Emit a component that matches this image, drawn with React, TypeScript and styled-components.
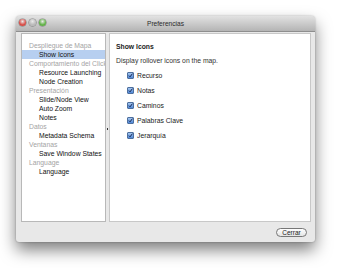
import React from "react"
import styled, { createGlobalStyle } from "styled-components"

const GlobalStyle = createGlobalStyle`
  html, body { margin: 0; padding: 0; background: #fff; }
  body { font-family: "Liberation Sans", Arial, sans-serif; }
`

type Item = { label: string; header?: boolean; selected?: boolean }

const sidebarItems: Item[] = [
  { label: "Despliegue de Mapa", header: true },
  { label: "Show Icons", selected: true },
  { label: "Comportamiento del Click", header: true },
  { label: "Resource Launching" },
  { label: "Node Creation" },
  { label: "Presentación", header: true },
  { label: "Slide/Node View" },
  { label: "Auto Zoom" },
  { label: "Notes" },
  { label: "Datos", header: true },
  { label: "Metadata Schema" },
  { label: "Ventanas", header: true },
  { label: "Save Window States" },
  { label: "Language", header: true },
  { label: "Language" },
]

const options = ["Recurso", "Notas", "Caminos", "Palabras Clave", "Jerarquía"]

const App: React.FC<{}> = () => {
  return (
    <Page>
      <GlobalStyle />
      <Window>
        <TitleBar>
          <Lights>
            <Light color="#d84a44" />
            <Light color="#b9b9b9" />
            <Light color="#5fb244" />
          </Lights>
          <Title>Preferencias</Title>
        </TitleBar>
        <Body>
          <Panels>
            <Sidebar>
              {sidebarItems.map((item, i) => (
                <SideRow key={i} header={item.header} selected={item.selected}>
                  {item.label}
                </SideRow>
              ))}
            </Sidebar>
            <Splitter>
              <Grip />
            </Splitter>
            <Content>
              <Heading>Show Icons</Heading>
              <Description>Display rollover icons on the map.</Description>
              <Options>
                {options.map((o) => (
                  <Option key={o}>
                    <Check>
                      <svg width="7" height="7" viewBox="0 0 7 7">
                        <path d="M1.2 3.6 L2.9 5.3 L6.2 0.9" stroke="#0e1c44" strokeWidth="1.3" fill="none" />
                      </svg>
                    </Check>
                    {o}
                  </Option>
                ))}
              </Options>
            </Content>
          </Panels>
          <Footer>
            <Button>Cerrar</Button>
          </Footer>
        </Body>
      </Window>
    </Page>
  )
}

export default App

const Page = styled.div`
  width: 340px;
  height: 268px;
  padding: 16px 0 0 16px;
  box-sizing: border-box;
`

const Window = styled.div`
  width: 299px;
  height: 226px;
  background: #e8e8e8;
  border-radius: 4px 4px 3px 3px;
  box-shadow: 0 8px 16px rgba(0, 0, 0, 0.5), 0 0 2px rgba(0, 0, 0, 0.3);
  display: flex;
  flex-direction: column;
  overflow: hidden;
`

const TitleBar = styled.div`
  height: 16px;
  flex: none;
  position: relative;
  display: flex;
  align-items: center;
  justify-content: center;
  background: linear-gradient(#e2e2e2, #b4b4b4);
  border-bottom: 1px solid #8e8e8e;
  box-sizing: border-box;
`

const Lights = styled.div`
  position: absolute;
  left: 3px;
  top: 3px;
  display: flex;
  gap: 3px;
`

const Light = styled.span<{ color: string }>`
  width: 7px;
  height: 7px;
  border-radius: 50%;
  background: radial-gradient(circle at 50% 35%, #fff8 0, ${(p) => p.color} 60%);
  box-shadow: 0 0 0 0.5px rgba(0, 0, 0, 0.4);
`

const Title = styled.div`
  font-size: 6.6px;
  color: #2a2a2a;
`

const Body = styled.div`
  flex: 1;
  display: flex;
  flex-direction: column;
  padding: 1px 4px 0 5px;
`

const Panels = styled.div`
  height: 189px;
  display: flex;
`

const Sidebar = styled.div`
  width: 85px;
  background: #fff;
  border: 1px solid #b8b8b8;
  box-sizing: border-box;
  padding-top: 7px;
  overflow: hidden;
`

const SideRow = styled.div<{ header?: boolean; selected?: boolean }>`
  height: 9px;
  line-height: 9px;
  font-size: 6.8px;
  white-space: nowrap;
  padding-left: ${(p) => (p.header ? 7 : 17)}px;
  color: ${(p) => (p.header ? "#a4a4a4" : "#111")};
  background: ${(p) => (p.selected ? "#b7cff0" : "transparent")};
`

const Splitter = styled.div`
  width: 3px;
  display: flex;
  align-items: center;
  justify-content: center;
`

const Grip = styled.span`
  width: 1.5px;
  height: 2px;
  background: #333;
  margin-top: 2px;
`

const Content = styled.div`
  flex: 1;
  background: #fff;
  border: 1px solid #c8c8c8;
  box-sizing: border-box;
  padding: 8px 0 0 6px;
`

const Heading = styled.div`
  font-size: 6.8px;
  font-weight: 700;
  color: #222;
  line-height: 9px;
`

const Description = styled.div`
  font-size: 6.8px;
  color: #333;
  line-height: 9px;
  margin-top: 5px;
`

const Options = styled.div`
  display: flex;
  flex-direction: column;
  gap: 6px;
  padding-left: 11px;
  margin-top: 6px;
`

const Option = styled.div`
  display: flex;
  align-items: center;
  gap: 3px;
  height: 9px;
  font-size: 6.8px;
  color: #222;
`

const Check = styled.span`
  width: 7px;
  height: 7px;
  border-radius: 1px;
  background: linear-gradient(#a4c6ef, #4f86d6);
  border: 0.5px solid #4d6f9e;
  box-sizing: border-box;
  display: flex;
  align-items: center;
  justify-content: center;
`

const Footer = styled.div`
  flex: 1;
  display: flex;
  justify-content: flex-end;
  align-items: center;
  padding-right: 4px;
`

const Button = styled.div`
  width: 31px;
  height: 9px;
  border-radius: 5px;
  border: 1px solid #777;
  background: linear-gradient(#fff, #e4e4e4);
  box-sizing: border-box;
  font-size: 6.5px;
  line-height: 7px;
  text-align: center;
  color: #222;
`
